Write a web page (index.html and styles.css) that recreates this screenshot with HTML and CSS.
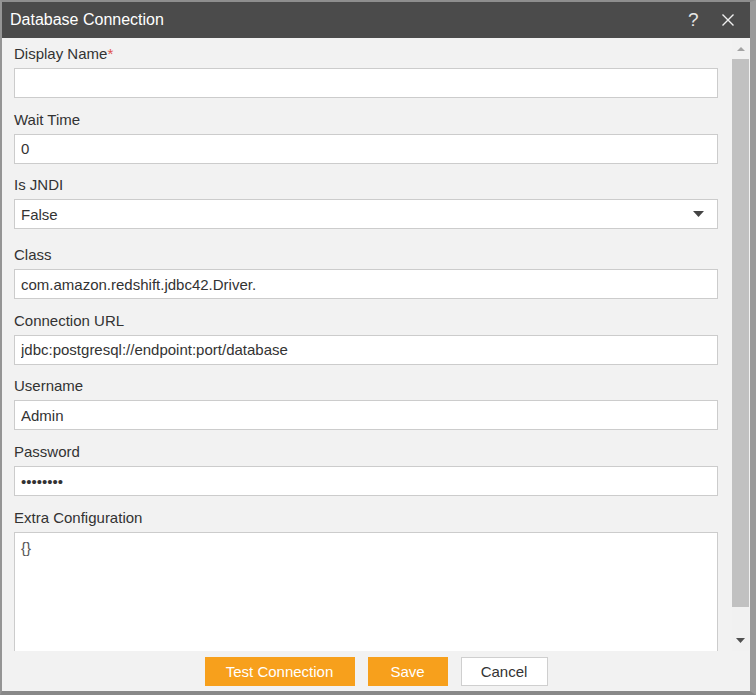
FILE: index.html
```html
<!DOCTYPE html>
<html lang="en">
<head>
<meta charset="utf-8">
<title>Database Connection</title>
<link rel="stylesheet" href="styles.css">
</head>
<body>
<div class="dialog">
  <div class="titlebar">
    <span class="title">Database Connection</span>
    <div class="actions">
      <span class="help">?</span>
      <svg class="close" width="12" height="12" viewBox="0 0 12 12"><path d="M0.5 0.5L11.5 11.5M11.5 0.5L0.5 11.5" stroke="#f0f0f0" stroke-width="1.4" fill="none"/></svg>
    </div>
  </div>
  <div class="main">
    <div class="form">
      <div class="field">
        <label class="label">Display Name<span class="req">*</span></label>
        <input class="input" type="text" value="">
      </div>
      <div class="field">
        <label class="label">Wait Time</label>
        <input class="input" type="text" value="0">
      </div>
      <div class="field field-select">
        <label class="label">Is JNDI</label>
        <div class="select">
          <span>False</span>
          <svg width="11" height="6" viewBox="0 0 11 6"><path d="M0 0H11L5.5 6Z" fill="#444"/></svg>
        </div>
      </div>
      <div class="field">
        <label class="label">Class</label>
        <input class="input" type="text" value="com.amazon.redshift.jdbc42.Driver.">
      </div>
      <div class="field">
        <label class="label">Connection URL</label>
        <input class="input" type="text" value="jdbc:postgresql://endpoint:port/database">
      </div>
      <div class="field">
        <label class="label">Username</label>
        <input class="input" type="text" value="Admin">
      </div>
      <div class="field">
        <label class="label">Password</label>
        <input class="input" type="password" value="password">
      </div>
      <div class="field">
        <label class="label">Extra Configuration</label>
        <textarea class="textarea">{}</textarea>
      </div>
    </div>
    <div class="scrollbar">
      <div class="sb-btn"><svg width="8" height="4" viewBox="0 0 8 4"><path d="M0 4L4 0L8 4Z" fill="#a3a3a3"/></svg></div>
      <div class="sb-track"><div class="sb-thumb"></div></div>
      <div class="sb-btn"><svg width="9" height="5" viewBox="0 0 9 5"><path d="M0 0H9L4.5 5Z" fill="#505050"/></svg></div>
    </div>
  </div>
  <div class="footer">
    <button class="btn btn-primary btn-test">Test Connection</button>
    <button class="btn btn-primary btn-save">Save</button>
    <button class="btn btn-default btn-cancel">Cancel</button>
  </div>
</div>
</body>
</html>
```
FILE: styles.css
```css
* {
  box-sizing: border-box;
}

html, body {
  margin: 0;
  padding: 0;
  background: #8c8c8c;
}

body {
  font-family: "Liberation Sans", Arial, sans-serif;
  color: #333;
}

.dialog {
  width: 756px;
  height: 695px;
  display: flex;
  flex-direction: column;
  border-top: 2px solid #8e8e8e;
  border-left: 2px solid #959595;
  border-right: 6px solid #9a9a9a;
  border-bottom: 4px solid #888;
  background: #f2f2f2;
  overflow: hidden;
}

.titlebar {
  height: 36px;
  flex: none;
  background: #4b4b4b;
  display: flex;
  align-items: center;
  justify-content: space-between;
  padding: 0 16px 0 8px;
}

.title {
  color: #fff;
  font-size: 16px;
}

.actions {
  display: flex;
  align-items: center;
  gap: 22px;
}

.help {
  color: #e6e6e6;
  font-size: 19px;
  line-height: 20px;
  width: 12px;
}

.close {
  display: block;
}

.main {
  height: 613px;
  flex: none;
  display: flex;
}

.form {
  flex: 1;
  overflow: hidden;
  padding: 6px 14px 0 12px;
}

.field {
  display: flex;
  flex-direction: column;
  margin-bottom: 11.7px;
}

.field-select {
  margin-bottom: 15.7px;
}

.label {
  font-size: 15px;
  line-height: 20px;
  height: 20px;
  margin-bottom: 4px;
  color: #333;
}

.req {
  color: #e0504a;
}

.input,
.select,
.textarea {
  width: 704px;
  border: 1px solid #cccccc;
  background: #fff;
  font-family: "Liberation Sans", Arial, sans-serif;
  font-size: 15px;
  color: #333;
  margin: 0;
  border-radius: 0;
  outline: none;
}

.input {
  height: 30px;
  padding: 0 6px;
}

.select {
  height: 30px;
  padding: 0 13px 0 6px;
  display: flex;
  align-items: center;
  justify-content: space-between;
}

.select svg {
  display: block;
}

.textarea {
  height: 150px;
  padding: 6px;
  resize: none;
  color: #555;
  line-height: 18px;
}

.scrollbar {
  width: 17px;
  margin-right: 1px;
  display: flex;
  flex-direction: column;
  background: #f1f1f1;
}

.sb-btn {
  height: 21px;
  flex: none;
  display: flex;
  align-items: center;
  justify-content: center;
}

.sb-btn svg {
  display: block;
}

.sb-track {
  flex: 1;
}

.sb-thumb {
  height: 548px;
  background: #c1c1c1;
}

.footer {
  height: 40px;
  flex: none;
  display: flex;
  justify-content: center;
  align-items: flex-start;
  gap: 13px;
  padding-top: 6px;
  background: #f2f2f2;
}

.btn {
  height: 29px;
  font-family: "Liberation Sans", Arial, sans-serif;
  font-size: 15px;
  padding: 0;
  margin: 0;
  border-radius: 0;
  cursor: pointer;
}

.btn-primary {
  background: #f7a01c;
  border: none;
  color: #fff;
}

.btn-default {
  background: #fff;
  border: 1px solid #cfcfcf;
  color: #333;
}

.btn-test {
  width: 150px;
}

.btn-save {
  width: 80px;
}

.btn-cancel {
  width: 87px;
}
```
